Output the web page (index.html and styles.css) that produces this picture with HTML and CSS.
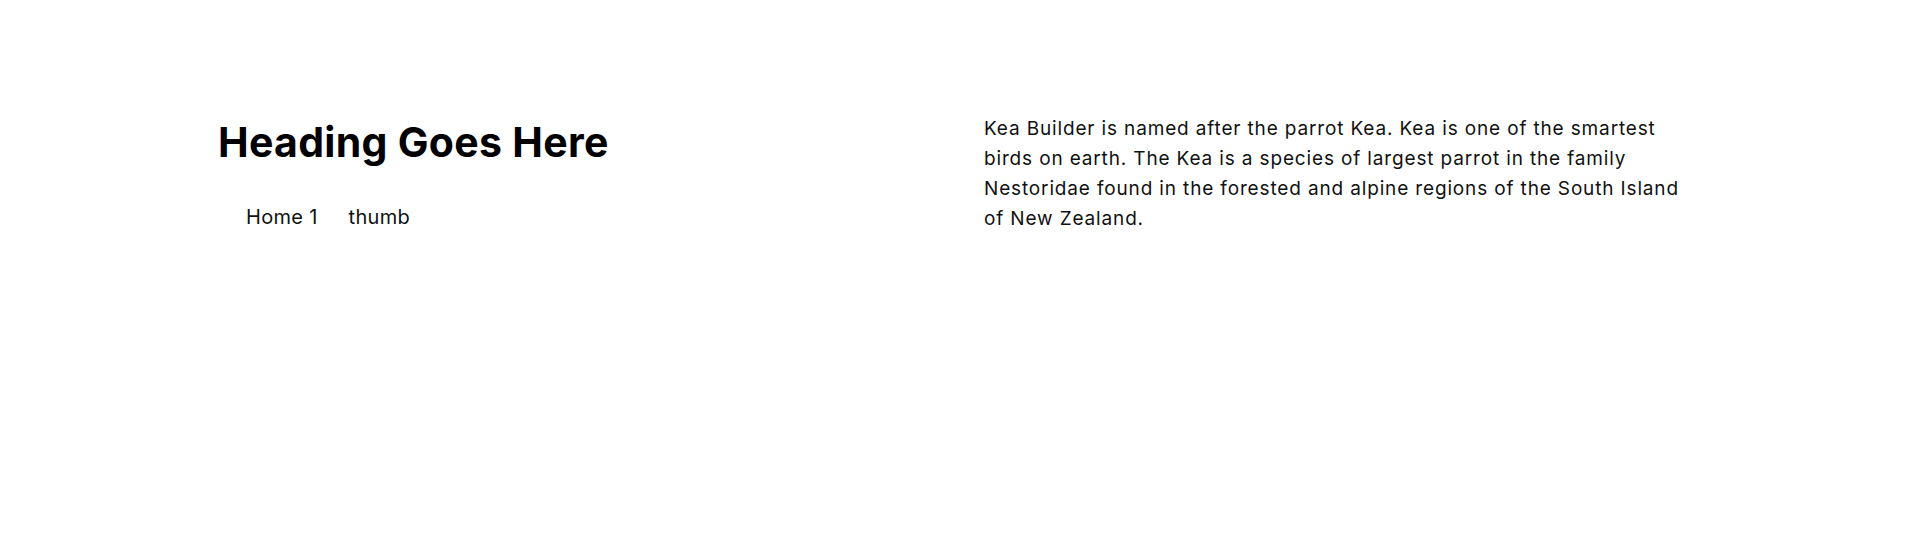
FILE: index.html
```html
<!DOCTYPE html>
<html lang="en">
<head>
<meta charset="utf-8">
<title>Heading Goes Here</title>
<link rel="stylesheet" href="styles.css">
</head>
<body>
<section class="page-header">
  <div class="container">
    <div class="col col-left">
      <h1 class="title">Heading Goes Here</h1>
      <nav class="breadcrumb">
        <a class="crumb" href="#">Home 1</a>
        <span class="sep"></span>
        <span class="crumb current">thumb</span>
      </nav>
    </div>
    <div class="col col-right">
      <p class="desc">Kea Builder is named after the parrot Kea. Kea is one of the smartest birds on earth. The Kea is a species of largest parrot in the family Nestoridae found in the forested and alpine regions of the South Island of New Zealand.</p>
    </div>
  </div>
</section>
</body>
</html>
```

FILE: styles.css
```css
html, body {
  margin: 0;
  padding: 0;
  background: #ffffff;
}
body {
  font-family: "Inter", "Open Sans", sans-serif;
  color: #111111;
  height: 543px;
}
.page-header {
  padding-top: 114px;
}
.container {
  width: 1532px;
  margin: 0 auto;
  display: flex;
}
.col {
  flex: 1 1 0;
  padding: 0 24px;
}
.title {
  margin: 0;
  font-size: 41px;
  line-height: 56px;
  font-weight: 700;
  color: #000000;
  letter-spacing: 0.3px;
}
.breadcrumb {
  display: flex;
  align-items: center;
  margin-top: 33px;
  padding-left: 28px;
  font-size: 20px;
  line-height: 28px;
  letter-spacing: 0.3px;
}
.crumb {
  color: #111111;
  text-decoration: none;
}
.sep {
  width: 31px;
}
.desc {
  margin: 0;
  font-size: 19px;
  line-height: 30px;
  letter-spacing: 0.85px;
  color: #111111;
}
```
